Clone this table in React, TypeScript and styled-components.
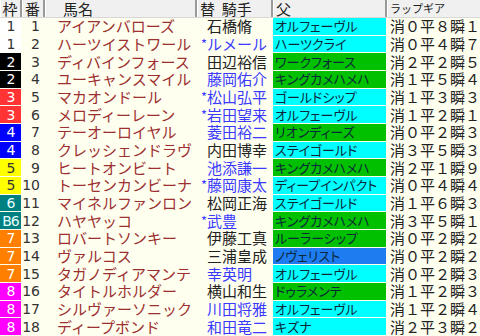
import styled, { createGlobalStyle } from "styled-components";

const GlobalStyle = createGlobalStyle`
  html, body {
    margin: 0;
    padding: 0;
    background: #fffff0;
  }
  body {
    font-family: "Noto Sans CJK JP", "Noto Sans", sans-serif;
  }
`;

const COLS = "22px 23px 152px 10px 66px 114px 93px";

const frameColors: Record<number, { bg: string; fg: string }> = {
  1: { bg: "#ffffff", fg: "#333333" },
  2: { bg: "#000000", fg: "#ffffff" },
  3: { bg: "#ff3333", fg: "#ffffff" },
  4: { bg: "#0000ff", fg: "#ffffff" },
  5: { bg: "#ffff00", fg: "#333333" },
  6: { bg: "#008080", fg: "#e8ffff" },
  7: { bg: "#ff8000", fg: "#ffffff" },
  8: { bg: "#ff00ff", fg: "#ffffff" },
};

const sireColors: Record<string, string> = {
  cyan: "#00ffff",
  green: "#00c000",
  blue: "#1e7cf0",
};

type Horse = {
  frame: number;
  frameLabel?: string;
  no: number;
  name: string;
  change: boolean;
  jockey: string;
  blue: boolean;
  sire: string;
  sireColor: string;
  gear: string;
};

const horses: Horse[] = [
  { frame: 1, no: 1, name: "アイアンバローズ", change: false, jockey: "石橋脩", blue: false, sire: "オルフェーヴル", sireColor: "cyan", gear: "消０平８瞬１" },
  { frame: 1, no: 2, name: "ハーツイストワール", change: true, jockey: "ルメール", blue: true, sire: "ハーツクライ", sireColor: "cyan", gear: "消０平４瞬７" },
  { frame: 2, no: 3, name: "ディバインフォース", change: false, jockey: "田辺裕信", blue: false, sire: "ワークフォース", sireColor: "green", gear: "消２平２瞬５" },
  { frame: 2, no: 4, name: "ユーキャンスマイル", change: false, jockey: "藤岡佑介", blue: true, sire: "キングカメハメハ", sireColor: "green", gear: "消１平５瞬４" },
  { frame: 3, no: 5, name: "マカオンドール", change: true, jockey: "松山弘平", blue: true, sire: "ゴールドシップ", sireColor: "cyan", gear: "消１平３瞬３" },
  { frame: 3, no: 6, name: "メロディーレーン", change: true, jockey: "岩田望来", blue: true, sire: "オルフェーヴル", sireColor: "cyan", gear: "消１平２瞬１" },
  { frame: 4, no: 7, name: "テーオーロイヤル", change: false, jockey: "菱田裕二", blue: true, sire: "リオンディーズ", sireColor: "green", gear: "消０平２瞬３" },
  { frame: 4, no: 8, name: "クレッシェンドラヴ", change: false, jockey: "内田博幸", blue: false, sire: "ステイゴールド", sireColor: "cyan", gear: "消３平５瞬３" },
  { frame: 5, no: 9, name: "ヒートオンビート", change: false, jockey: "池添謙一", blue: true, sire: "キングカメハメハ", sireColor: "green", gear: "消２平１瞬９" },
  { frame: 5, no: 10, name: "トーセンカンビーナ", change: true, jockey: "藤岡康太", blue: true, sire: "ディープインパクト", sireColor: "cyan", gear: "消０平４瞬４" },
  { frame: 6, no: 11, name: "マイネルファンロン", change: false, jockey: "松岡正海", blue: false, sire: "ステイゴールド", sireColor: "cyan", gear: "消１平６瞬３" },
  { frame: 6, frameLabel: "B6", no: 12, name: "ハヤヤッコ", change: true, jockey: "武豊", blue: true, sire: "キングカメハメハ", sireColor: "green", gear: "消３平５瞬１" },
  { frame: 7, no: 13, name: "ロバートソンキー", change: false, jockey: "伊藤工真", blue: false, sire: "ルーラーシップ", sireColor: "green", gear: "消０平２瞬２" },
  { frame: 7, no: 14, name: "ヴァルコス", change: false, jockey: "三浦皇成", blue: false, sire: "ノヴェリスト", sireColor: "blue", gear: "消０平２瞬２" },
  { frame: 7, no: 15, name: "タガノディアマンテ", change: false, jockey: "幸英明", blue: true, sire: "オルフェーヴル", sireColor: "cyan", gear: "消０平２瞬３" },
  { frame: 8, no: 16, name: "タイトルホルダー", change: false, jockey: "横山和生", blue: false, sire: "ドゥラメンテ", sireColor: "green", gear: "消１平２瞬３" },
  { frame: 8, no: 17, name: "シルヴァーソニック", change: false, jockey: "川田将雅", blue: true, sire: "オルフェーヴル", sireColor: "cyan", gear: "消１平２瞬４" },
  { frame: 8, no: 18, name: "ディープボンド", change: false, jockey: "和田竜二", blue: true, sire: "キズナ", sireColor: "cyan", gear: "消２平３瞬２" },
];

const App = () => {
  return (
    <>
      <GlobalStyle />
      <Table>
        <HeaderRow>
          <HeadCell $center>枠</HeadCell>
          <HeadCell $center>番</HeadCell>
          <HeadCell $pad={18}>馬名</HeadCell>
          <HeadCell $span={2} $pad={3}>替&nbsp;&nbsp;騎手</HeadCell>
          <HeadCell $pad={3}>父</HeadCell>
          <HeadCell $pad={3} $small>ラップギア</HeadCell>
        </HeaderRow>
        {horses.map((h) => (
          <Row key={h.no}>
            <FrameCell $bg={frameColors[h.frame].bg} $fg={frameColors[h.frame].fg}>
              {h.frameLabel ?? h.frame}
            </FrameCell>
            <NumCell>{h.no}</NumCell>
            <NameCell>{h.name}</NameCell>
            <ChangeCell>{h.change ? "*" : ""}</ChangeCell>
            <JockeyCell $blue={h.blue}>{h.jockey}</JockeyCell>
            <SireCell $bg={sireColors[h.sireColor]}>{h.sire}</SireCell>
            <GearCell>{h.gear}</GearCell>
          </Row>
        ))}
      </Table>
    </>
  );
};

const Table = styled.div`
  width: 480px;
  height: 336px;
  display: grid;
  grid-template-rows: 18px repeat(18, 1fr);
  background: #fffff0;
  overflow: hidden;
`;

const HeaderRow = styled.div`
  display: grid;
  grid-template-columns: ${COLS};
  background: #f0f0f0;
  border-bottom: 1px solid #d8d8d8;
  box-sizing: border-box;
`;

const HeadCell = styled.div<{ $center?: boolean; $pad?: number; $span?: number; $small?: boolean }>`
  grid-column: span ${(p) => p.$span ?? 1};
  display: flex;
  align-items: center;
  justify-content: ${(p) => (p.$center ? "center" : "flex-start")};
  padding-left: ${(p) => p.$pad ?? 0}px;
  font-size: ${(p) => (p.$small ? "11px" : "15px")};
  color: #222;
  line-height: 17px;
  border-right: 2px solid #9a9a9a;
  box-shadow: inset 1px 0 0 #ffffff;
  white-space: nowrap;
  &:last-child {
    border-right: none;
  }
`;

const Row = styled.div`
  display: grid;
  grid-template-columns: ${COLS};
  min-height: 0;
`;

const Cell = styled.div`
  display: flex;
  align-items: center;
  font-size: 15px;
  line-height: 16px;
  white-space: nowrap;
  margin-bottom: 1px;
`;

const FrameCell = styled(Cell)<{ $bg: string; $fg: string }>`
  justify-content: center;
  background: ${(p) => p.$bg};
  color: ${(p) => p.$fg};
  margin-right: 1px;
  font-family: "DejaVu Sans", sans-serif;
  font-size: 14px;
  letter-spacing: -1px;
`;

const NumCell = styled(Cell)`
  justify-content: flex-end;
  padding-right: 5px;
  color: #333;
  font-family: "DejaVu Sans", sans-serif;
  font-size: 14px;
`;

const NameCell = styled(Cell)`
  padding-left: 12px;
  color: #9c2f2f;
`;

const ChangeCell = styled(Cell)`
  justify-content: flex-end;
  color: #3a3aff;
  font-size: 13px;
`;

const JockeyCell = styled(Cell)<{ $blue: boolean }>`
  color: ${(p) => (p.$blue ? "#3a3aff" : "#222")};
`;

const SireCell = styled(Cell)<{ $bg: string }>`
  background: ${(p) => p.$bg};
  color: #0a2838;
  padding-left: 2px;
  margin-right: 1px;
  font-size: 13px;
  font-feature-settings: "palt";
`;

const GearCell = styled(Cell)`
  padding-left: 3px;
  color: #222;
`;

export default App;
